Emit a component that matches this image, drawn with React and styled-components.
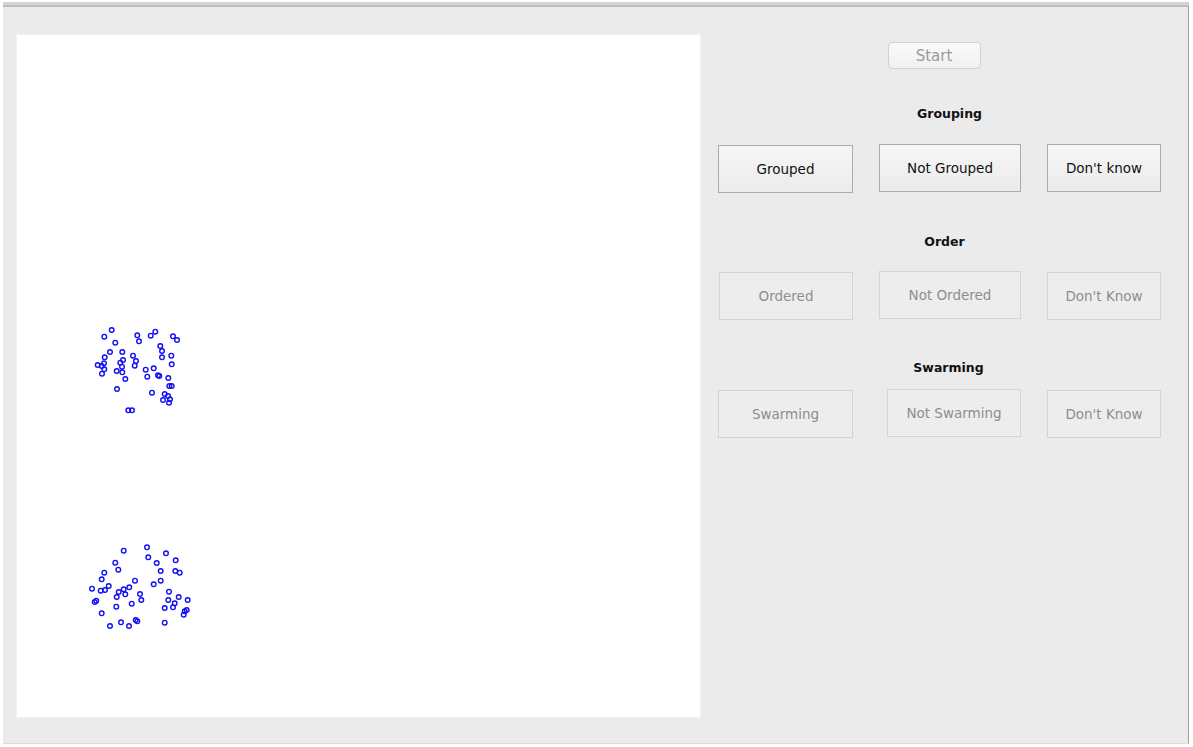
import React from "react";
import styled, { createGlobalStyle } from "styled-components";

const GlobalStyle = createGlobalStyle`
  html, body {
    margin: 0;
    padding: 0;
    background: #ffffff;
    font-family: "DejaVu Sans", "Liberation Sans", sans-serif;
  }
`

const Frame = styled.div`
  margin: 2px 0 0 3px;
  width: 1186px;
  height: 742px;
  box-sizing: border-box;
  background: #ebebeb;
  border-right: 1px solid #9c9c9c;
  border-bottom: 1px solid #dcdcdc;
  display: flex;
  flex-direction: column;
`

const TitleStrip = styled.div`
  height: 3px;
  background: #d4d4d4;
  border-bottom: 2px solid #bdbdbd;
  margin-right: -1px;
`

const Body = styled.div`
  flex: 1;
  display: flex;
  padding: 27px 0 0 13px;
`

const Canvas = styled.div`
  width: 685px;
  height: 684px;
  box-sizing: border-box;
  background: #ffffff;
  border: 1px solid #f3f3f3;
  flex-shrink: 0;
`

const Panel = styled.div`
  flex: 1;
  display: flex;
  flex-direction: column;
  padding: 8px 27px 0 17px;
`

const StartButton = styled.button`
  align-self: center;
  margin-right: 11px;
  width: 93px;
  height: 27px;
  border: 1px solid #d2d2d2;
  border-radius: 4px;
  background: linear-gradient(#f9f9f9, #f1f1f1);
  color: #9b9b9b;
  font-family: inherit;
  font-size: 15px;
  padding: 0;
`

const Section = styled.div`
  margin-top: ${(p) => p.$top}px;
  display: flex;
  flex-direction: column;
  gap: ${(p) => p.$gap}px;
`

const Label = styled.div`
  text-align: center;
  padding-left: ${(p) => p.$shift}px;
  font-weight: bold;
  font-size: 12.5px;
  line-height: 16px;
  color: #111;
`

const Row = styled.div`
  display: grid;
  grid-template-columns: 135px 142px 114px;
  justify-content: space-between;
`

const Choice = styled.button`
  justify-self: end;
  width: ${(p) => p.$w || "100%"};
  height: 48px;
  box-sizing: border-box;
  padding: 0;
  font-family: inherit;
  font-size: 13.5px;
  border: 1px solid ${(p) => (p.disabled ? "#d3d3d3" : "#ababab")};
  background: ${(p) =>
    p.disabled ? "#ededed" : "linear-gradient(#f6f6f6, #ebebeb)"};
  color: ${(p) => (p.disabled ? "#8d8d8d" : "#111")};
  margin-top: ${(p) => p.$dy || 0}px;
`

const Dot = styled.circle`
  fill: none;
  stroke: #1010f0;
  stroke-width: 1.4;
`

const clusterA = [
  [111.7, 330], [104.3, 336.7], [137.3, 335.3], [139, 341.3], [150.7, 335.7],
  [155.3, 331.7], [173, 336.3], [177, 340], [115.3, 342.7], [160.3, 346],
  [162, 351], [110, 352], [122.3, 352], [104.7, 357.3], [133, 355.7],
  [171.3, 355.7], [162, 357.3], [97.7, 365], [101.7, 366], [104, 363.3],
  [104.3, 369.3], [102, 373.7], [120.3, 362.7], [123, 360], [122, 366.7],
  [136, 361], [134.7, 365.7], [171.7, 364.3], [116.7, 371], [122.3, 372.3],
  [125.3, 379], [145.7, 369.7], [147.3, 376.7], [153.7, 368.3], [158, 375.3],
  [159.3, 376], [168.3, 378], [169.3, 386], [171.7, 386], [117, 389],
  [152, 392.7], [164.7, 394], [168, 396], [163, 400], [170, 399.3],
  [169, 402.7], [128.3, 410.3], [132, 410.3],
];

const clusterB = [
  [123.7, 550.7], [147, 547.3], [148.3, 557.3], [166, 553.3], [175.7, 560.3],
  [115.3, 562.7], [118.3, 569.7], [156.7, 563], [104.3, 572.7], [160.7, 571],
  [175.3, 571], [179.7, 572.7], [101.7, 579.3], [153.7, 584.3], [160.7, 580.7],
  [135, 580.7], [108.7, 586], [92, 588.7], [100.7, 590.7], [105, 590],
  [118.7, 592], [123.7, 589.3], [129.3, 587.3], [125.3, 594.3], [116.7, 597],
  [140, 594], [141.3, 600], [169, 591.7], [178.7, 597], [168.3, 600],
  [174.7, 603.3], [187.7, 600], [94.7, 602], [96.3, 600.7], [131.7, 603.7],
  [116.3, 606.7], [164.7, 608], [173, 607.3], [184.7, 611.3], [186.7, 610],
  [183.7, 614.7], [101.7, 613.3], [121, 622.3], [135.7, 620], [137.3, 621.3],
  [110, 626], [129, 626], [164.7, 622.7],
];

const sections = [
  {
    title: "Grouping",
    top: 37,
    gap: 22,
    shift: 20,
    disabled: false,
    items: [{ text: "Grouped", dy: 1 }, { text: "Not Grouped" }, { text: "Don't know" }],
  },
  {
    title: "Order",
    top: 41,
    gap: 21,
    shift: 10,
    disabled: true,
    items: [{ text: "Ordered", w: "134px", dy: 1 }, { text: "Not Ordered" }, { text: "Don't Know", dy: 1 }],
  },
  {
    title: "Swarming",
    top: 40,
    gap: 13,
    shift: 18,
    disabled: true,
    items: [{ text: "Swarming", dy: 1 }, { text: "Not Swarming", w: "134px" }, { text: "Don't Know", dy: 1 }],
  },
];

const App = () => {
  return (
    <>
      <GlobalStyle />
      <Frame>
        <TitleStrip />
        <Body>
          <Canvas>
            <svg width="683" height="682" viewBox="17 35 683 682">
              {[...clusterA, ...clusterB].map(([x, y], i) => (
                <Dot key={i} cx={x} cy={y} r="2.3" />
              ))}
            </svg>
          </Canvas>
          <Panel>
            <StartButton disabled>Start</StartButton>
            {sections.map((s) => (
              <Section key={s.title} $top={s.top} $gap={s.gap}>
                <Label $shift={s.shift}>{s.title}</Label>
                <Row>
                  {s.items.map((it) => (
                    <Choice key={it.text} disabled={s.disabled} $w={it.w} $dy={it.dy}>
                      {it.text}
                    </Choice>
                  ))}
                </Row>
              </Section>
            ))}
          </Panel>
        </Body>
      </Frame>
    </>
  );
};

export default App;
